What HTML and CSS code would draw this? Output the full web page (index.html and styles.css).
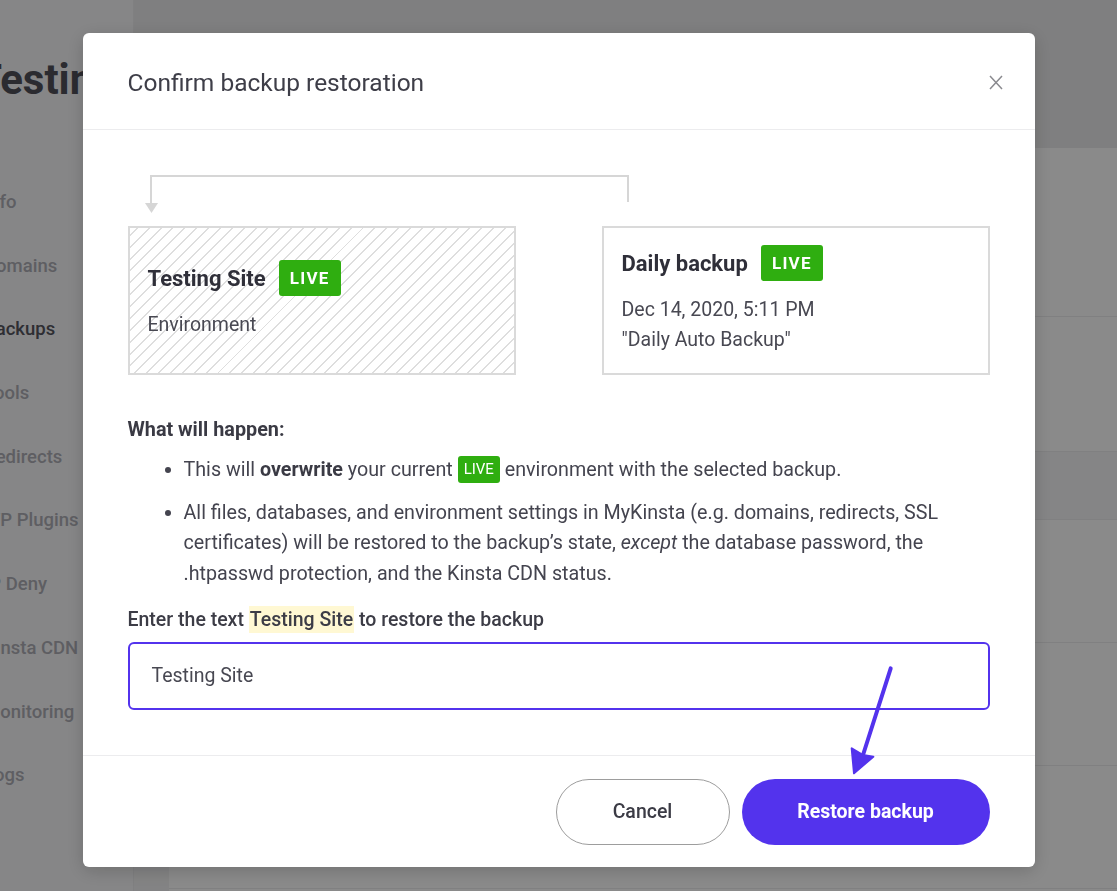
FILE: index.html
```html
<!DOCTYPE html>
<html lang="en">
<head>
<meta charset="utf-8">
<title>Confirm backup restoration</title>
<link rel="stylesheet" href="styles.css">
</head>
<body>
<div class="page">
  <aside class="sidebar">
    <h1 class="site-title">Testing Site</h1>
    <nav class="nav">
      <a class="nav-item">Info</a>
      <a class="nav-item">Domains</a>
      <a class="nav-item active">Backups</a>
      <a class="nav-item">Tools</a>
      <a class="nav-item">Redirects</a>
      <a class="nav-item">WP Plugins</a>
      <a class="nav-item">IP Deny</a>
      <a class="nav-item">Kinsta CDN</a>
      <a class="nav-item">Monitoring</a>
      <a class="nav-item">Logs</a>
    </nav>
  </aside>
  <main class="main">
    <div class="main-header"></div>
    <div class="panel">
      <div class="row row-a"></div>
      <div class="row row-b"></div>
      <div class="row row-head"></div>
      <div class="row row-c"></div>
      <div class="row row-c"></div>
      <div class="row row-c"></div>
    </div>
  </main>
</div>

<div class="overlay">
  <div class="modal">
    <header class="modal-header">
      <h2 class="modal-title">Confirm backup restoration</h2>
      <button class="close" aria-label="Close">
        <svg width="14" height="15" viewBox="0 0 14 15"><path d="M1 1L13 14M13 1L1 14" stroke="#8a8a8f" stroke-width="1.5" fill="none"/></svg>
      </button>
    </header>

    <section class="modal-body">
      <svg class="flow" width="502" height="51" viewBox="0 0 502 51">
        <path d="M23 28V1H500V27" stroke="#d6d6d6" stroke-width="2" fill="none"/>
        <polygon points="17,28 30,28 23.5,38" fill="#d6d6d6"/>
      </svg>
      <div class="cards">
        <div class="card card-hatched">
          <div class="card-title">Testing Site <span class="badge">LIVE</span></div>
          <div class="card-text">Environment</div>
        </div>
        <div class="card">
          <div class="card-title">Daily backup <span class="badge">LIVE</span></div>
          <div class="card-text">Dec 14, 2020, 5:11 PM</div>
          <div class="card-line">"Daily Auto Backup"</div>
        </div>
      </div>

      <h3 class="what">What will happen:</h3>
      <ul class="effects">
        <li>This will <strong>overwrite</strong> your current <span class="badge-sm">LIVE</span> environment with the selected backup.</li>
        <li>All files, databases, and environment settings in MyKinsta (e.g. domains, redirects, SSL certificates) will be restored to the backup’s state, <em>except</em> the database password, the .htpasswd protection, and the Kinsta CDN status.</li>
      </ul>

      <label class="confirm-label">Enter the text <mark class="hl">Testing Site</mark> to restore the backup</label>
      <div class="input">Testing Site</div>
    </section>

    <footer class="modal-footer">
      <button class="btn btn-cancel">Cancel</button>
      <button class="btn btn-primary">Restore backup</button>
    </footer>

    <svg class="annotation" width="60" height="120" viewBox="0 0 60 120">
      <path d="M47.7 5.3L20 92" stroke="#5333ed" stroke-width="4" stroke-linecap="round" fill="none"/>
      <polygon points="8.7,85.3 11,110.3 30.3,93.7 20,92" fill="#5333ed" stroke="#5333ed" stroke-width="2" stroke-linejoin="round"/>
    </svg>
  </div>
</div>
</body>
</html>
```

FILE: styles.css
```css
* { box-sizing: border-box; }

html, body {
  margin: 0;
  width: 1117px;
  height: 891px;
  overflow: hidden;
  font-family: Roboto, "Liberation Sans", sans-serif;
}

/* background page */
.page {
  display: flex;
  height: 891px;
}

.sidebar {
  width: 134px;
  flex: none;
  background: #f8f8f9;
  border-right: 1px solid #ececee;
  overflow: hidden;
}

.site-title {
  margin: 56px 0 0 -24px;
  font-size: 42px;
  line-height: 48px;
  font-weight: 700;
  color: #50505a;
  white-space: nowrap;
}

.nav {
  margin-top: 67px;
  display: flex;
  flex-direction: column;
}

.nav-item {
  display: block;
  height: 63.7px;
  line-height: 63.7px;
  margin-left: -16px;
  font-size: 18.5px;
  font-weight: 500;
  color: #aeaeb6;
  white-space: nowrap;
}

.nav-item.active { color: #55555f; }

.main {
  flex: 1;
  display: flex;
  flex-direction: column;
  background: #f3f3f4;
}

.main-header {
  height: 148px;
  background: #ebebec;
}

.panel {
  flex: 1;
  margin-left: 35px;
  background: #ffffff;
}

.row { border-bottom: 1px solid #ececee; }
.row-a { height: 169px; }
.row-b { height: 135px; }
.row-head { height: 68px; background: #f6f6f7; }
.row-c { height: 123px; }

/* overlay + modal */
.overlay {
  position: fixed;
  inset: 0;
  background: rgba(0, 0, 0, 0.46);
  display: flex;
  justify-content: center;
  align-items: flex-start;
  padding-top: 33px;
}

.modal {
  position: relative;
  width: 952px;
  background: #fff;
  border-radius: 6px;
  box-shadow: 0 4px 18px rgba(0, 0, 0, 0.18);
  display: flex;
  flex-direction: column;
}

.modal-header {
  height: 97px;
  border-bottom: 1px solid #ececee;
  display: flex;
  align-items: center;
  justify-content: space-between;
  padding: 2px 32px 0 45px;
}

.modal-title {
  margin: 0;
  font-size: 24.5px;
  font-weight: 400;
  color: #3e3e48;
}

.close {
  border: 0;
  background: none;
  padding: 0;
  width: 14px;
  height: 15px;
  display: flex;
}

.modal-body {
  padding: 45px 45px 45px;
}

.flow { display: block; }

.cards {
  display: grid;
  grid-template-columns: 388px 388px;
  justify-content: space-between;
}

.card {
  border: 2px solid #dadada;
  padding: 17px 18px 18px;
  display: flex;
  flex-direction: column;
  justify-content: center;
  background: #fff;
}

.card-hatched {
  background: repeating-linear-gradient(-45deg, #ffffff 0 7px, #dedede 7px 8.4px);
}

.card-title {
  display: flex;
  align-items: center;
  gap: 13px;
  height: 36px;
  font-size: 22px;
  font-weight: 700;
  color: #2f2f39;
}

.badge {
  display: inline-flex;
  align-items: center;
  justify-content: center;
  width: 62px;
  height: 36px;
  border-radius: 3px;
  background: #2fae10;
  color: #fff;
  font-size: 17px;
  font-weight: 700;
  letter-spacing: 1.2px;
}

.card-text {
  margin-top: 14px;
  font-size: 19.5px;
  line-height: 30px;
  color: #484852;
}

.card-line {
  font-size: 19.5px;
  line-height: 30px;
  color: #484852;
}

.what {
  margin: 40px 0 0;
  font-size: 19.8px;
  line-height: 30px;
  font-weight: 700;
  color: #3a3a44;
}

.effects {
  margin: 10px 0 0;
  padding-left: 56px;
}

.effects li {
  font-size: 19.7px;
  line-height: 30.5px;
  color: #44444f;
}

.effects li + li { margin-top: 12px; }

.effects strong { font-weight: 700; color: #3a3a44; }

.badge-sm {
  display: inline-block;
  height: 27px;
  line-height: 27px;
  padding: 0 6px;
  border-radius: 3px;
  background: #2fae10;
  color: #fff;
  font-size: 15px;
  font-weight: 400;
  vertical-align: middle;
  margin-top: -3px;
}

.confirm-label {
  display: block;
  margin-top: 15.5px;
  font-size: 19.5px;
  line-height: 30px;
  font-weight: 500;
  color: #3c3c46;
}

.hl {
  background: #fff8d3;
  color: #3c3c46;
  padding: 2px 1px;
}

.input {
  margin-top: 7px;
  height: 68px;
  border: 2px solid #5333ed;
  border-radius: 6px;
  padding: 0 22px;
  display: flex;
  align-items: center;
  font-size: 19.5px;
  color: #484852;
}

.modal-footer {
  border-top: 1px solid #ececee;
  padding: 23px 45px 22px;
  display: flex;
  justify-content: flex-end;
  gap: 12px;
}

.btn {
  height: 66px;
  border-radius: 33px;
  font-family: Roboto, "Liberation Sans", sans-serif;
  font-size: 19.5px;
  cursor: pointer;
}

.btn-cancel {
  width: 174px;
  background: #fff;
  border: 1px solid #9d9d9d;
  color: #3b3b45;
  font-weight: 500;
}

.btn-primary {
  width: 248px;
  background: #5333ed;
  border: 0;
  color: #fff;
  font-weight: 700;
}

.annotation {
  position: absolute;
  left: 760px;
  top: 630px;
  pointer-events: none;
}
```
